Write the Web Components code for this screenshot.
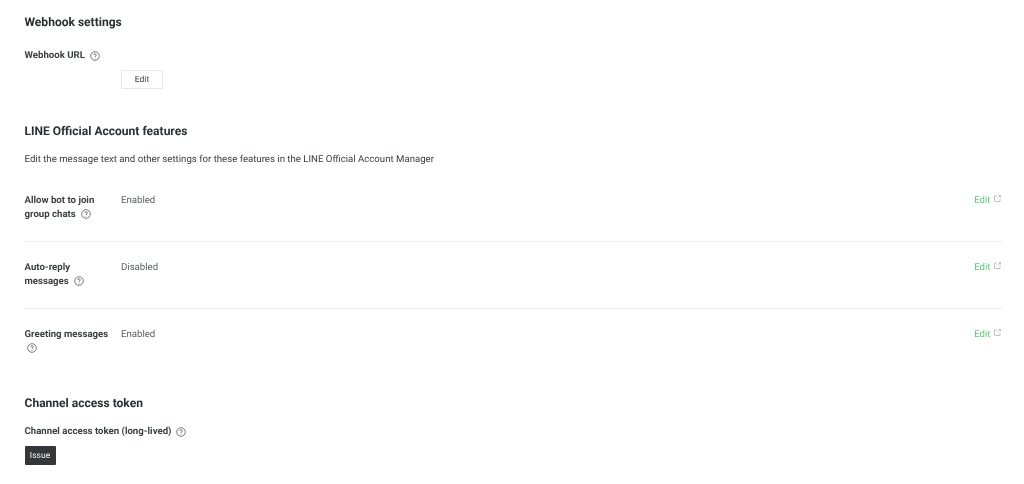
<!DOCTYPE html>
<html>
<head>
<meta charset="utf-8">
<title>Messaging settings</title>
<style>
  html, body { margin: 0; background: #fff; }
  body { font-family: Roboto, "Liberation Sans", sans-serif; color: #2f3437; text-rendering: geometricPrecision; }
</style>
</head>
<body>
<settings-page>
  <settings-section heading="Webhook settings" gap="18" after="34">
    <field-block label="Webhook URL">
      <line-button indent>Edit</line-button>
    </field-block>
  </settings-section>

  <settings-section heading="LINE Official Account features" gap="13" after="39">
    <p-text>Edit the message text and other settings for these features in the LINE Official Account Manager</p-text>
    <feature-row value="Enabled" first>Allow bot to join<br>group chats<help-icon></help-icon></feature-row>
    <feature-row value="Disabled">Auto-reply<br>messages<help-icon></help-icon></feature-row>
    <feature-row value="Enabled" last>Greeting messages<br><help-icon flush></help-icon></feature-row>
  </settings-section>

  <settings-section heading="Channel access token" gap="13" after="0">
    <field-block label="Channel access token (long-lived)">
      <dark-button>Issue</dark-button>
    </field-block>
  </settings-section>
</settings-page>

<script>
class SettingsPage extends HTMLElement {
  constructor() {
    super();
    this.attachShadow({ mode: 'open' });
    this.shadowRoot.innerHTML = `
      <style>
        :host { display: block; box-sizing: border-box; width: 1024px; height: 484px; padding: 14px 22px 0 24.5px; overflow: hidden; filter: blur(.3px); }
      </style>
      <slot></slot>
    `;
  }
}

class SettingsSection extends HTMLElement {
  constructor() {
    super();
    this.attachShadow({ mode: 'open' });
    this.shadowRoot.innerHTML = `
      <style>
        :host { display: block; }
        h2 { margin: 0; font-size: 12.05px; line-height: 17px; font-weight: 700; color: #2b2f32; }
      </style>
      <h2></h2>
      <div id="body"><slot></slot></div>
    `;
  }
  connectedCallback() {
    this.shadowRoot.querySelector('h2').textContent = this.getAttribute('heading');
    this.shadowRoot.querySelector('#body').style.marginTop = this.getAttribute('gap') + 'px';
    this.style.marginBottom = this.getAttribute('after') + 'px';
  }
}

class FieldBlock extends HTMLElement {
  constructor() {
    super();
    this.attachShadow({ mode: 'open' });
    this.shadowRoot.innerHTML = `
      <style>
        :host { display: block; }
        #label { font-size: 9.65px; line-height: 14px; font-weight: 700; color: #3b4043; display: flex; align-items: center; }
        #content { margin-top: 7px; }
      </style>
      <div id="label"><span></span><help-icon></help-icon></div>
      <div id="content"><slot></slot></div>
    `;
  }
  connectedCallback() {
    this.shadowRoot.querySelector('span').textContent = this.getAttribute('label');
  }
}

class HelpIcon extends HTMLElement {
  constructor() {
    super();
    this.attachShadow({ mode: 'open' });
    this.shadowRoot.innerHTML = `
      <style>
        :host { display: inline-block; width: 10px; height: 10px; margin-left: 5px; vertical-align: -1.5px; }
        :host([flush]) { margin-left: 2px; }
        svg { display: block; }
      </style>
      <svg width="10" height="10" viewBox="0 0 10 10" fill="none" stroke="#555a5d" stroke-width=".8">
        <circle cx="5" cy="5" r="4.3"/>
        <path d="M3.7 4c0-.8.6-1.3 1.3-1.3S6.300 3.200 6.300 3.900c0 1-1.300 1-1.300 2.100"/>
        <path d="M5 6.800v.8"/>
      </svg>
    `;
  }
}

class LineButton extends HTMLElement {
  constructor() {
    super();
    this.attachShadow({ mode: 'open' });
    this.shadowRoot.innerHTML = `
      <style>
        :host { display: block; box-sizing: border-box; width: 42px; height: 19px; padding-top: 1px; border: 1px solid #e6e7e8; border-radius: 1px; font-size: 8.500px; line-height: 16px; text-align: center; color: #3b4043; background: #fff; }
        :host([indent]) { margin-left: 96.500px; }
      </style>
      <slot></slot>
    `;
  }
}

class DarkButton extends HTMLElement {
  constructor() {
    super();
    this.attachShadow({ mode: 'open' });
    this.shadowRoot.innerHTML = `
      <style>
        :host { display: block; box-sizing: border-box; width: 31px; height: 19px; padding-top: 1px; border-radius: 1px; font-size: 8.500px; line-height: 18px; text-align: center; color: #f2f3f3; background: #33373a; }
      </style>
      <slot></slot>
    `;
  }
}

class PText extends HTMLElement {
  constructor() {
    super();
    this.attachShadow({ mode: 'open' });
    this.shadowRoot.innerHTML = `
      <style>
        :host { display: block; font-size: 9.65px; line-height: 14px; color: #3b4043; margin-bottom: 26px; }
      </style>
      <slot></slot>
    `;
  }
}

class FeatureRow extends HTMLElement {
  constructor() {
    super();
    this.attachShadow({ mode: 'open' });
    this.shadowRoot.innerHTML = `
      <style>
        :host { display: grid; grid-template-columns: 96.500px 1fr auto; padding: 19px 0; border-bottom: 1px solid #eeeeef; font-size: 9.65px; line-height: 14px; }
        :host([first]) { padding-top: 1px; }
        :host([last]) { border-bottom: 0; padding-bottom: 0; }
        #name { font-weight: 700; color: #3b4043; }
        #value { color: #5c6164; }
        #edit { color: #5fcb78; display: flex; align-items: flex-start; gap: 3px; padding-right: 1.5px; }
        svg { display: block; margin-top: 1px; }
      </style>
      <div id="name"><slot></slot></div>
      <div id="value"></div>
      <div id="edit"><span>Edit</span>
        <svg width="7" height="7" viewBox="0 0 7 7" fill="none" stroke="#b5b7b8" stroke-width=".8">
          <path d="M3 1H.5v5.500H6V4"/>
          <path d="M3.500 3.500L6.500.500M4.500.500h2v2"/>
        </svg>
      </div>
    `;
  }
  connectedCallback() {
    this.shadowRoot.querySelector('#value').textContent = this.getAttribute('value');
  }
}

customElements.define('settings-page', SettingsPage);
customElements.define('settings-section', SettingsSection);
customElements.define('field-block', FieldBlock);
customElements.define('help-icon', HelpIcon);
customElements.define('line-button', LineButton);
customElements.define('dark-button', DarkButton);
customElements.define('p-text', PText);
customElements.define('feature-row', FeatureRow);
</script>
</body>
</html>
